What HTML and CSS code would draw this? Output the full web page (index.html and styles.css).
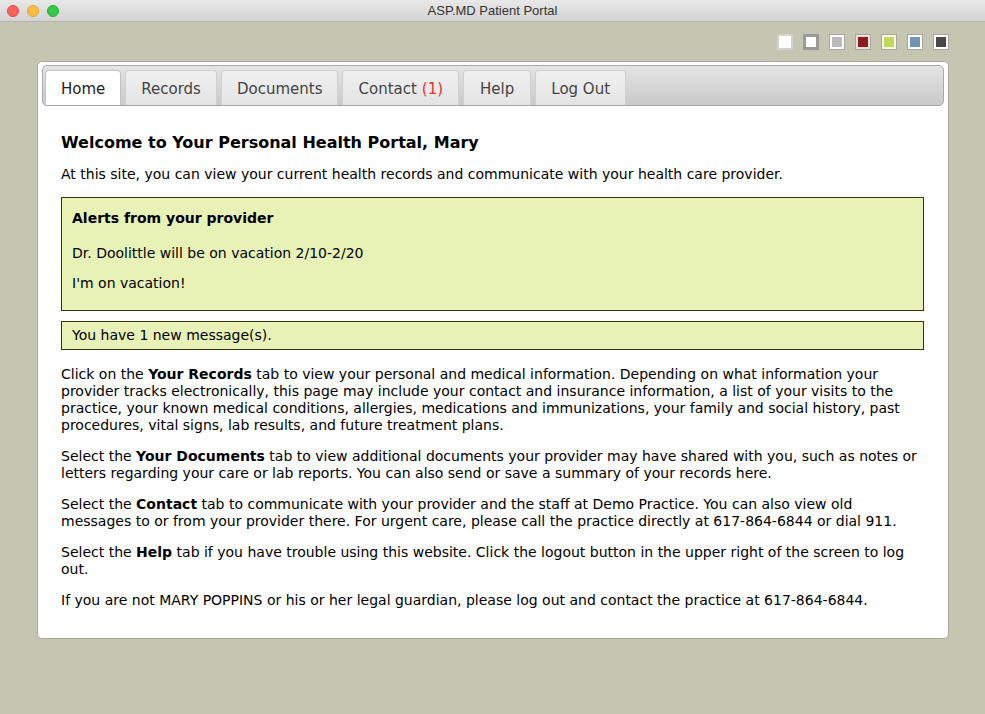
FILE: index.html
```html
<!DOCTYPE html>
<html lang="en">
<head>
    <meta charset="UTF-8">
    <title>ASP.MD Patient Portal</title>
    <link rel="stylesheet" href="styles.css">
</head>
<body>
    <!-- Заголовок окна -->
    <div class="titlebar">
        <div class="lights">
            <span class="light red"></span>
            <span class="light yellow"></span>
            <span class="light green"></span>
        </div>
        <div class="title">ASP.MD Patient Portal</div>
    </div>

    <div class="page">
        <!-- Переключатель темы -->
        <div class="themes">
            <span class="swatch sw-white"></span>
            <span class="swatch sw-gray-border"></span>
            <span class="swatch sw-silver"></span>
            <span class="swatch sw-red"></span>
            <span class="swatch sw-lime"></span>
            <span class="swatch sw-blue"></span>
            <span class="swatch sw-dark"></span>
        </div>

        <div class="portal">
            <ul class="tabs">
                <li class="tab active">Home</li>
                <li class="tab">Records</li>
                <li class="tab">Documents</li>
                <li class="tab">Contact <span class="count">(1)</span></li>
                <li class="tab help">Help</li>
                <li class="tab">Log Out</li>
            </ul>

            <div class="content">
                <h1>Welcome to Your Personal Health Portal, Mary</h1>
                <p>At this site, you can view your current health records and communicate with your health care provider.</p>

                <div class="notice alerts">
                    <h2>Alerts from your provider</h2>
                    <p>Dr. Doolittle will be on vacation 2/10-2/20</p>
                    <p>I'm on vacation!</p>
                </div>

                <div class="notice messages">You have 1 new message(s).</div>

                <p>Click on the <b>Your Records</b> tab to view your personal and medical information. Depending on what information your provider tracks electronically, this page may include your contact and insurance information, a list of your visits to the practice, your known medical conditions, allergies, medications and immunizations, your family and social history, past procedures, vital signs, lab results, and future treatment plans.</p>
                <p>Select the <b>Your Documents</b> tab to view additional documents your provider may have shared with you, such as notes or letters regarding your care or lab reports. You can also send or save a summary of your records here.</p>
                <p>Select the <b>Contact</b> tab to communicate with your provider and the staff at Demo Practice. You can also view old messages to or from your provider there. For urgent care, please call the practice directly at 617-864-6844 or dial 911.</p>
                <p>Select the <b>Help</b> tab if you have trouble using this website. Click the logout button in the upper right of the screen to log out.</p>
                <p>If you are not MARY POPPINS or his or her legal guardian, please log out and contact the practice at 617-864-6844.</p>
            </div>
        </div>
    </div>
</body>
</html>
```

FILE: styles.css
```css
/* Основные стили */
body {
    margin: 0;
    height: 714px;
    overflow: hidden;
    background: #c5c6b2;
    font-family: 'DejaVu Sans', Verdana, sans-serif;
    font-size: 14px;
    color: #000;
}

/* Заголовок окна */
.titlebar {
    height: 22px;
    background: linear-gradient(#e8e8e8, #d3d3d3);
    border-bottom: 1px solid #b4b4b4;
    position: relative;
    display: flex;
    align-items: center;
    justify-content: center;
    box-sizing: border-box;
}

.lights {
    position: absolute;
    left: 7px;
    top: 5px;
    display: flex;
    gap: 8px;
}

.light {
    width: 12px;
    height: 12px;
    border-radius: 50%;
    box-sizing: border-box;
}

.light.red { background: #fc605c; border: 1px solid #de4a46; }
.light.yellow { background: #fdbc40; border: 1px solid #dea236; }
.light.green { background: #34c84a; border: 1px solid #27aa35; }

.title {
    font-family: 'Liberation Sans', Arial, sans-serif;
    font-size: 13px;
    color: #333;
}

.page {
    padding: 12px 36px 0 37px;
}

/* Переключатель темы */
.themes {
    display: flex;
    justify-content: flex-end;
    gap: 10px;
    height: 16px;
    margin-bottom: 11px;
}

.swatch {
    width: 16px;
    height: 16px;
    box-sizing: border-box;
    border: 1px solid #a8a8a0;
    box-shadow: inset 0 0 0 2px #fff;
}

.sw-white { background: #fff; border: 2px solid #d2d2d2; box-shadow: none; }
.sw-gray-border { background: #fff; border: 3px solid #9a9a9a; box-shadow: none; }
.sw-silver { background: #bbb; }
.sw-red { background: #8b1a22; box-shadow: inset 0 0 0 2px #eee0da; }
.sw-lime { background: #c0d85c; box-shadow: inset 0 0 0 2px #f6f8e4; }
.sw-blue { background: #6e96b4; }
.sw-dark { background: #484848; }

/* Основная панель */
.portal {
    background: #fff;
    border: 1px solid #a9aa9c;
    border-radius: 5px;
    padding: 3px 4px 0 4px;
    height: 578px;
    box-sizing: border-box;
}

.tabs {
    list-style: none;
    margin: 0;
    padding: 4px 0 0 2px;
    height: 41px;
    box-sizing: border-box;
    display: flex;
    align-items: flex-end;
    gap: 4px;
    background: linear-gradient(#e4e4e4, #c9c9c9);
    border: 1px solid #a9a9a9;
    border-radius: 5px;
}

.tab {
    height: 35px;
    box-sizing: border-box;
    padding: 1px 15px 0;
    display: flex;
    align-items: center;
    font-size: 15px;
    color: #444;
    background: linear-gradient(#f0f0f0, #e4e4e4);
    border: 1px solid #d0d0d0;
    border-bottom: none;
    border-radius: 4px 4px 0 0;
}

.tab.help {
    padding: 1px 16px 0;
}

.tab.active {
    background: #fff;
    color: #222;
    border-color: #c2c2c2;
}

.count {
    color: #f0302a;
    margin-left: 5px;
}

/* Содержимое */
.content {
    padding: 27px 20px 0 19px;
}

.content h1 {
    font-size: 16px;
    line-height: 19px;
    font-weight: bold;
    margin: 0 0 14px;
}

.content p {
    margin: 0 0 14px;
    line-height: 17px;
}

.notice {
    background: #e8f2b6;
    border: 1px solid #3b3208;
    padding: 0 10px;
}

.notice h2 {
    font-size: 14px;
    line-height: 17px;
    font-weight: bold;
    margin: 12px 0 18px;
}

.notice.alerts {
    margin-top: 14px;
    padding-bottom: 18px;
    margin-bottom: 10px;
}

.notice.alerts p {
    margin: 0 0 13px;
}

.notice.alerts p:last-child {
    margin-bottom: 0;
}

.messages {
    height: 29px;
    box-sizing: border-box;
    line-height: 27px;
    margin-bottom: 16px;
}
```
